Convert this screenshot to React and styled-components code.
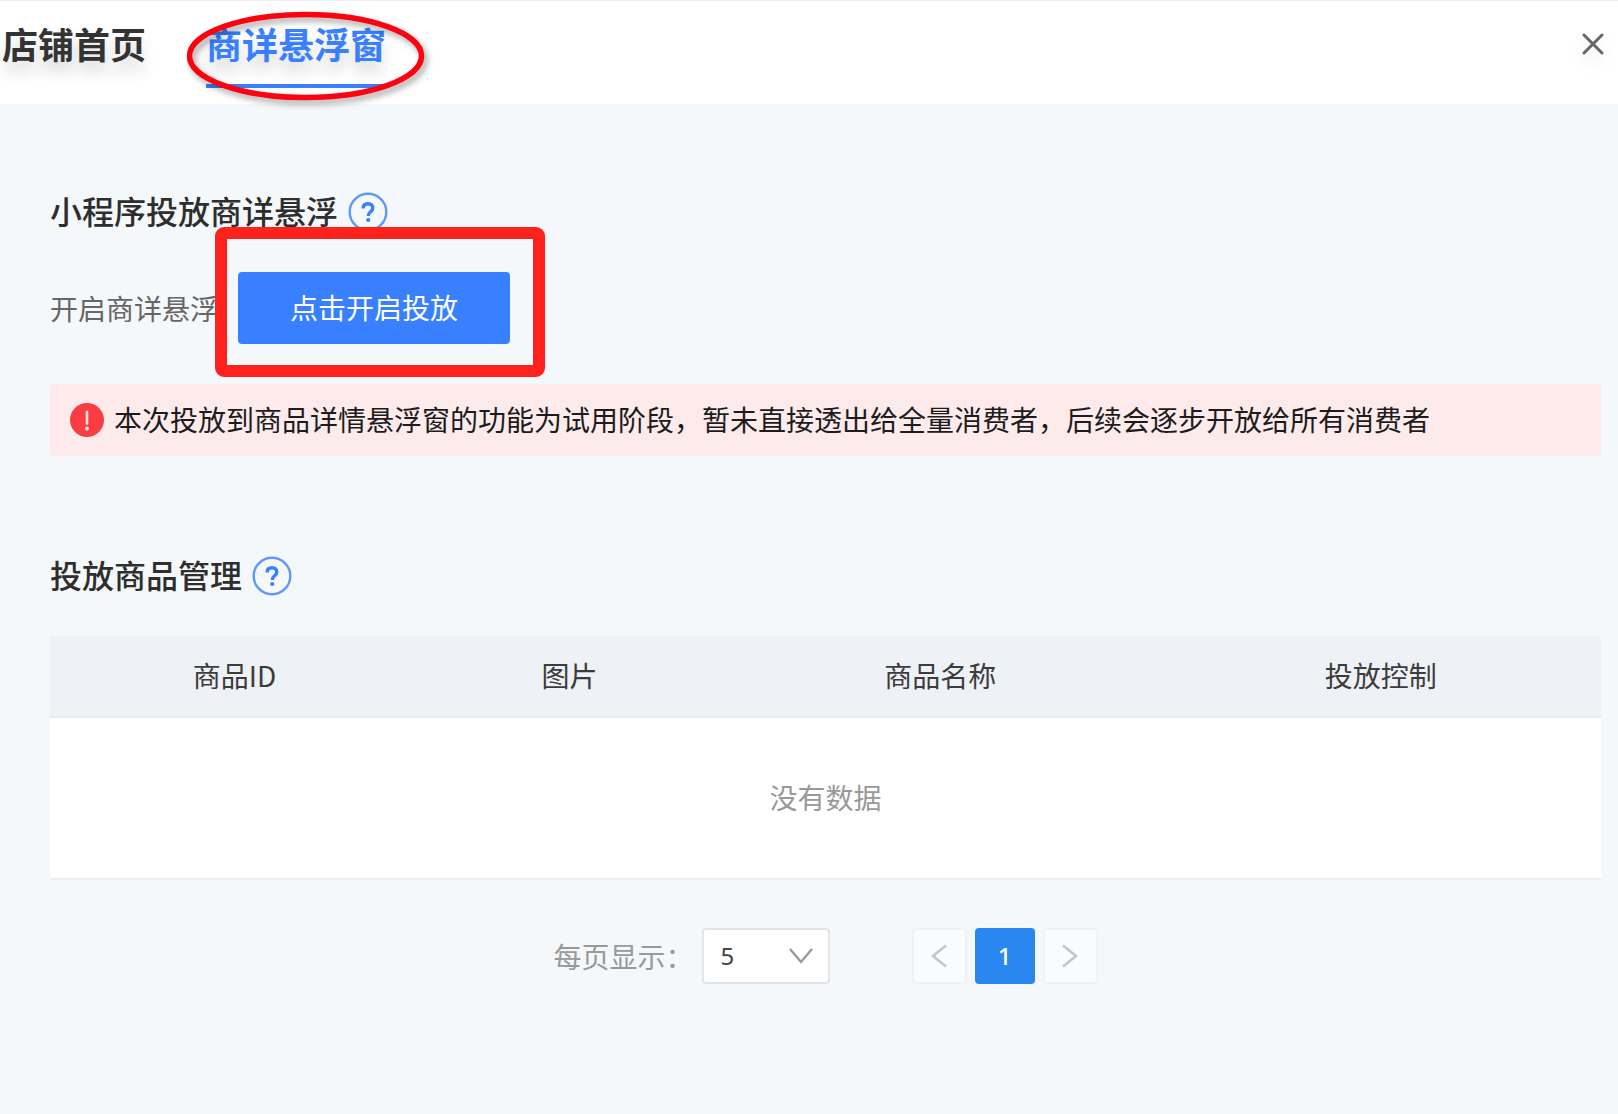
import React, { useState } from 'react';
import styled, { createGlobalStyle } from 'styled-components';

const GlobalStyle = createGlobalStyle`
    * {
        box-sizing: border-box;
    }
    body {
        margin: 0;
        background: #f5f8fa;
        color: #3c3c3c;
        font-family: "Noto Sans CJK SC", "Noto Sans", sans-serif;
        font-size: 28px;
        line-height: 40px;
    }
    button, select {
        font: inherit;
        color: inherit;
        margin: 0;
        padding: 0;
    }
`;

const Page = styled.div`
    min-height: 100vh;
    background: #f5f8fa;
`;

const Header = styled.header`
    display: flex;
    align-items: flex-start;
    justify-content: space-between;
    height: 104px;
    padding: 0 8px 0 2px;
    background: #fff;
    border-top: 1px solid #eff2f3;
`;

const Tabs = styled.nav`
    display: flex;
    gap: 60px;
`;

const TabItem = styled.div`
    position: relative;
`;

const Tab = styled.button`
    display: block;
    height: 87px;
    border: 0;
    border-bottom: 4px solid ${props => (props.$active ? '#3880ff' : 'transparent')};
    background: none;
    color: ${props => (props.$active ? '#3880ff' : '#333')};
    font-size: 36px;
    font-weight: 700;
    line-height: 82px;
    text-shadow: 0 12px 14px rgba(0, 0, 0, 0.14);
    cursor: pointer;
`;

const Circle = styled.svg`
    position: absolute;
    top: 7px;
    left: -24px;
    width: 250px;
    height: 102px;
    overflow: visible;
    pointer-events: none;
    filter: drop-shadow(3px 4px 3px rgba(0, 0, 0, 0.35));
`;

const CloseButton = styled.button`
    display: flex;
    align-items: center;
    justify-content: center;
    width: 34px;
    height: 86px;
    border: 0;
    background: none;
    color: #666;
    cursor: pointer;
    filter: drop-shadow(0 8px 8px rgba(0, 0, 0, 0.1));
`;

const Content = styled.main`
    padding: 84px 17px 0 50px;
`;

const Section = styled.section`
    margin-bottom: 96px;
`;

const TitleRow = styled.div`
    display: flex;
    align-items: center;
    gap: 10px;
    height: 48px;
`;

const Title = styled.h2`
    margin: 0;
    padding-bottom: 4px;
    color: #2e2e2e;
    font-size: 32px;
    font-weight: 500;
    line-height: 44px;
`;

const HelpButton = styled.button`
    display: flex;
    border: 0;
    background: none;
    color: #3880ff;
    cursor: pointer;
`;

const SwitchRow = styled.div`
    display: flex;
    align-items: center;
    gap: 20px;
    margin: 36px 0 40px;
    color: #666;
`;

const ButtonWrap = styled.div`
    position: relative;
`;

const PrimaryButton = styled.button`
    display: block;
    height: 72px;
    padding: 0 52px 2px;
    border: 0;
    border-radius: 4px;
    background: #3880ff;
    color: #fff;
    cursor: pointer;
`;

const Marker = styled.div`
    position: absolute;
    top: -45px;
    right: -35px;
    bottom: -33px;
    left: -23px;
    border: 12px solid #ff221c;
    border-radius: 9px;
    pointer-events: none;
`;

const Alert = styled.div`
    display: flex;
    align-items: center;
    gap: 10px;
    min-height: 72px;
    padding: 0 20px;
    border-radius: 4px;
    background: #fdeaeb;
    color: #1c1c1c;
`;

const AlertText = styled.span`
    padding-bottom: 2px;
`;

const Table = styled.table`
    width: 100%;
    margin-top: 36px;
    border-spacing: 0;
    table-layout: fixed;
    background: #fff;
    border-bottom: 2px solid #ebeef0;
`;

const HeadCell = styled.th`
    width: ${props => props.$width};
    height: 82px;
    padding: 0 0 2px;
    border-bottom: 2px solid #e9ebef;
    background: #eef1f6;
    font-weight: 400;
`;

const EmptyCell = styled.td`
    height: 160px;
    padding: 0 0 2px;
    color: #999;
    text-align: center;
`;

const Footer = styled.footer`
    display: flex;
    align-items: center;
    justify-content: center;
    gap: 82px;
    margin-top: 48px;
`;

const PageSize = styled.div`
    display: flex;
    align-items: center;
    gap: 8px;
    color: #999;
`;

const SelectWrap = styled.div`
    position: relative;
    color: #999;
`;

const Select = styled.select`
    display: block;
    appearance: none;
    width: 128px;
    height: 56px;
    padding: 0 48px 0 17px;
    border: 2px solid #e2e4e7;
    border-radius: 4px;
    background: #fff;
    color: #444;
    font-family: "Noto Sans", sans-serif;
    font-size: 24px;
`;

const SelectArrow = styled.svg`
    position: absolute;
    top: 19px;
    right: 16px;
    pointer-events: none;
`;

const Pager = styled.nav`
    display: flex;
    align-items: center;
    gap: 8px;
`;

const PagerButton = styled.button`
    display: flex;
    align-items: center;
    justify-content: center;
    width: ${props => (props.$current ? '60px' : '55px')};
    height: 56px;
    border: ${props => (props.$current ? '0' : '2px solid #f0f2f4')};
    border-radius: 4px;
    background: ${props => (props.$current ? '#2b87f0' : '#fafbfc')};
    color: ${props => (props.$current ? '#fff' : '#c4c6c8')};
    font-family: "Noto Sans", sans-serif;
    font-size: 24px;
    font-weight: 500;
`;

const columns = [
    { name: '商品ID', width: '23.8%' },
    { name: '图片', width: '19.4%' },
    { name: '商品名称', width: '28.4%' },
    { name: '投放控制', width: '28.4%' },
];

const Help = () => (
    <HelpButton type="button" aria-label="帮助">
        <svg width="40" height="40" viewBox="0 0 40 40" fill="none" stroke="currentColor">
            <circle cx="20" cy="20" r="18.3" stroke="#5c98ff" strokeWidth="2.4" />
            <path d="M15.2 16.4c0-3 1.9-4.7 4.8-4.7s4.8 1.7 4.8 4.2c0 2-1.1 3-2.5 4.1-1.5 1.1-2 1.9-2 4" strokeWidth="3.4" />
            <circle cx="20.2" cy="28" r="2.1" fill="currentColor" stroke="none" />
        </svg>
    </HelpButton>
);

const SectionTitle = ({ children }) => (
    <TitleRow>
        <Title>{children}</Title>
        <Help />
    </TitleRow>
);

const App = () => {
    const [pageSize, setPageSize] = useState('5');

    return (
        <Page>
            <GlobalStyle />
            <Header>
                <Tabs>
                    <TabItem>
                        <Tab type="button">店铺首页</Tab>
                    </TabItem>
                    <TabItem>
                        <Tab type="button" $active>商详悬浮窗</Tab>
                        <Circle viewBox="0 0 250 102" aria-hidden="true">
                            <ellipse cx="123.5" cy="48" rx="116" ry="41.5" fill="none" stroke="#fb0410" strokeWidth="5.5" />
                        </Circle>
                    </TabItem>
                </Tabs>
                <CloseButton type="button" aria-label="关闭">
                    <svg width="22" height="22" viewBox="0 0 22 22" fill="none" stroke="currentColor" strokeWidth="3" strokeLinecap="round">
                        <path d="M2 2l18 18M20 2L2 20" />
                    </svg>
                </CloseButton>
            </Header>

            <Content>
                <Section>
                    <SectionTitle>小程序投放商详悬浮</SectionTitle>
                    <SwitchRow>
                        <span id="launch-label">开启商详悬浮</span>
                        <ButtonWrap>
                            <PrimaryButton type="button" aria-describedby="launch-label">点击开启投放</PrimaryButton>
                            <Marker />
                        </ButtonWrap>
                    </SwitchRow>
                    <Alert role="alert">
                        <svg width="34" height="34" viewBox="0 0 34 34">
                            <circle cx="17" cy="17" r="17" fill="#f93e43" />
                            <path d="M17 9v11.5" stroke="#fde3e4" strokeWidth="2.6" strokeLinecap="round" />
                            <circle cx="17" cy="25.5" r="2" fill="#fde3e4" />
                        </svg>
                        <AlertText>本次投放到商品详情悬浮窗的功能为试用阶段，暂未直接透出给全量消费者，后续会逐步开放给所有消费者</AlertText>
                    </Alert>
                </Section>

                <section>
                    <SectionTitle>投放商品管理</SectionTitle>
                    <Table>
                        <thead>
                            <tr>
                                {columns.map(column => (
                                    <HeadCell key={column.name} scope="col" $width={column.width}>{column.name}</HeadCell>
                                ))}
                            </tr>
                        </thead>
                        <tbody>
                            <tr>
                                <EmptyCell colSpan={columns.length}>没有数据</EmptyCell>
                            </tr>
                        </tbody>
                    </Table>
                </section>

                <Footer>
                    <PageSize>
                        <label htmlFor="page-size">每页显示：</label>
                        <SelectWrap>
                            <Select id="page-size" value={pageSize} onChange={e => setPageSize(e.target.value)}>
                                <option value="5">5</option>
                                <option value="10">10</option>
                                <option value="20">20</option>
                            </Select>
                            <SelectArrow width="26" height="18" viewBox="0 0 26 18" fill="none" stroke="currentColor" strokeWidth="2.4">
                                <path d="M2 2l11 13L24 2" />
                            </SelectArrow>
                        </SelectWrap>
                    </PageSize>
                    <Pager aria-label="分页">
                        <PagerButton type="button" aria-label="上一页" disabled>
                            <svg width="18" height="24" viewBox="0 0 18 24" fill="none" stroke="currentColor" strokeWidth="2.6">
                                <path d="M16 1.5L3 12l13 10.5" />
                            </svg>
                        </PagerButton>
                        <PagerButton type="button" $current aria-current="page">1</PagerButton>
                        <PagerButton type="button" aria-label="下一页" disabled>
                            <svg width="18" height="24" viewBox="0 0 18 24" fill="none" stroke="currentColor" strokeWidth="2.6">
                                <path d="M2 1.5L15 12 2 22.5" />
                            </svg>
                        </PagerButton>
                    </Pager>
                </Footer>
            </Content>
        </Page>
    );
};

export default App;
